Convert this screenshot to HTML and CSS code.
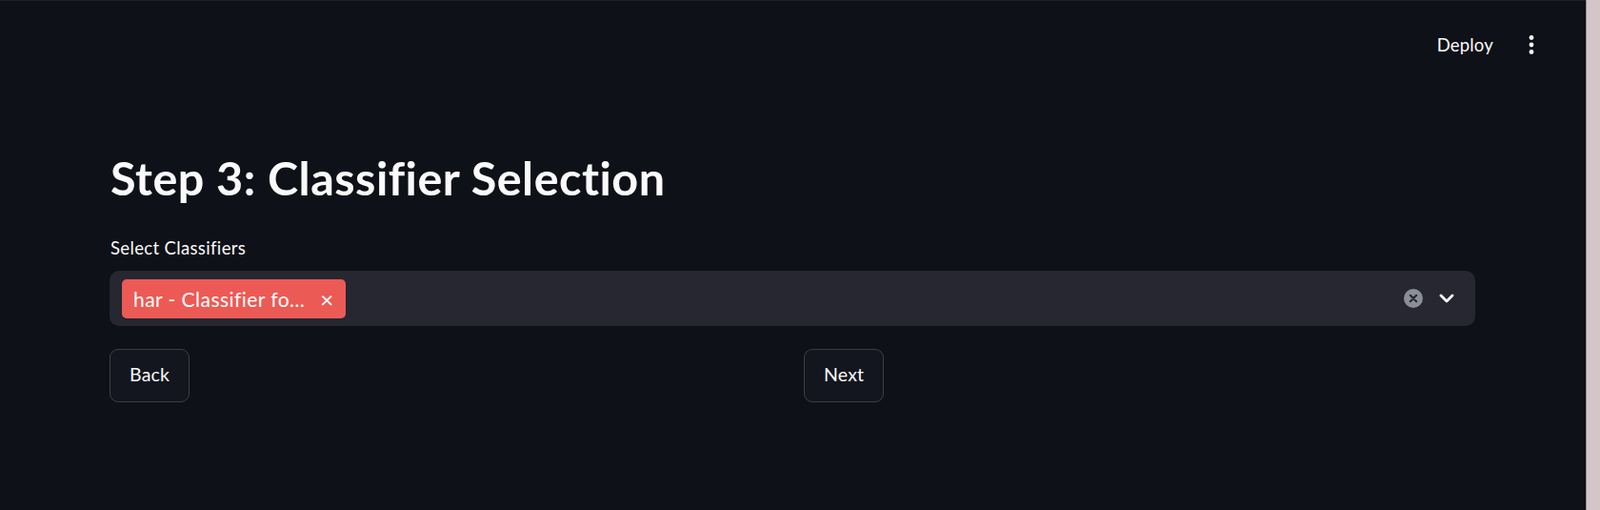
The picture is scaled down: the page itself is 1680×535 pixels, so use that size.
FILE: index.html
```html
<!DOCTYPE html>
<html lang="en">
<head>
    <meta charset="UTF-8">
    <title>Step 3: Classifier Selection</title>
    <link rel="stylesheet" href="styles.css">
</head>
<body>
    <div class="app">
        <!-- Toolbar -->
        <header class="toolbar">
            <span class="deploy">Deploy</span>
            <span class="kebab">
                <svg width="8" height="22" viewBox="0 0 8 22">
                    <circle cx="4" cy="3.5" r="2.4" fill="#fafafa"/>
                    <circle cx="4" cy="11" r="2.4" fill="#fafafa"/>
                    <circle cx="4" cy="18.5" r="2.4" fill="#fafafa"/>
                </svg>
            </span>
        </header>

        <!-- Main block -->
        <main class="main">
            <h1>Step 3: Classifier Selection</h1>

            <label class="field-label">Select Classifiers</label>
            <div class="multiselect">
                <div class="tags">
                    <span class="tag">har - Classifier fo…<span class="tag-x">×</span></span>
                </div>
                <div class="controls">
                    <svg class="clear" width="20" height="20" viewBox="0 0 20 20">
                        <circle cx="10" cy="10" r="10" fill="#8b8d98"/>
                        <path d="M6.8 6.8 L13.2 13.2 M13.2 6.8 L6.8 13.2" stroke="#262730" stroke-width="2.2" stroke-linecap="round"/>
                    </svg>
                    <svg class="chevron" width="16" height="10" viewBox="0 0 16 10">
                        <path d="M2 2 L8 8 L14 2" fill="none" stroke="#fafafa" stroke-width="2.8" stroke-linecap="round" stroke-linejoin="round"/>
                    </svg>
                </div>
            </div>

            <div class="columns">
                <div class="col"><button class="btn">Back</button></div>
                <div class="col"><button class="btn">Next</button></div>
            </div>
        </main>
    </div>
    <div class="edge"></div>
</body>
</html>
```

FILE: styles.css
```css
body {
    margin: 0;
    height: 535px;
    display: flex;
    background: #0e1117;
    color: #fafafa;
    font-family: Lato, "Noto Sans", sans-serif;
    font-variant-ligatures: none;
    overflow: hidden;
}

.app {
    flex: 1;
    border-top: 1px solid #1c1e25;
}

.toolbar {
    height: 91px;
    display: flex;
    align-items: center;
    justify-content: flex-end;
    padding-right: 53px;
}

.deploy {
    font-size: 18.5px;
    letter-spacing: 0.2px;
    margin-right: 36px;
}

.kebab {
    display: flex;
}

.main {
    padding: 0 116px 0 115px;
}

h1 {
    margin: 62px 0 0 1px;
    font-size: 48.5px;
    line-height: 64px;
    font-weight: 700;
    letter-spacing: 0.5px;
}

.field-label {
    display: block;
    margin: 30px 0 0 1px;
    font-size: 18.5px;
    line-height: 24px;
    letter-spacing: 0.35px;
}

.multiselect {
    margin-top: 12px;
    height: 58px;
    box-sizing: border-box;
    background: #262730;
    border-radius: 10px;
    display: flex;
    align-items: center;
    justify-content: space-between;
    padding: 0 22px 0 13px;
}

.tag {
    display: inline-flex;
    align-items: center;
    height: 41px;
    padding: 0 12px;
    background: #ec5a55;
    border-radius: 5px;
    font-size: 21px;
    letter-spacing: 0.45px;
    color: #fff;
}

.tag-x {
    margin-left: 16px;
    font-size: 24px;
}

.controls {
    display: flex;
    align-items: center;
    gap: 17px;
}

.columns {
    display: grid;
    grid-template-columns: 1fr 1fr;
    gap: 24px;
    margin-top: 24px;
}

.btn {
    height: 56px;
    padding: 0 20px 3px;
    background: #13161e;
    border: 1px solid #3c3e47;
    border-radius: 9px;
    color: #fafafa;
    font-family: Lato, "Noto Sans", sans-serif;
    font-size: 19.5px;
    letter-spacing: 0.2px;
}

.edge {
    width: 14px;
    background: #d4c5ca;
    border-left: 1px solid #8f8a8c;
}
```
